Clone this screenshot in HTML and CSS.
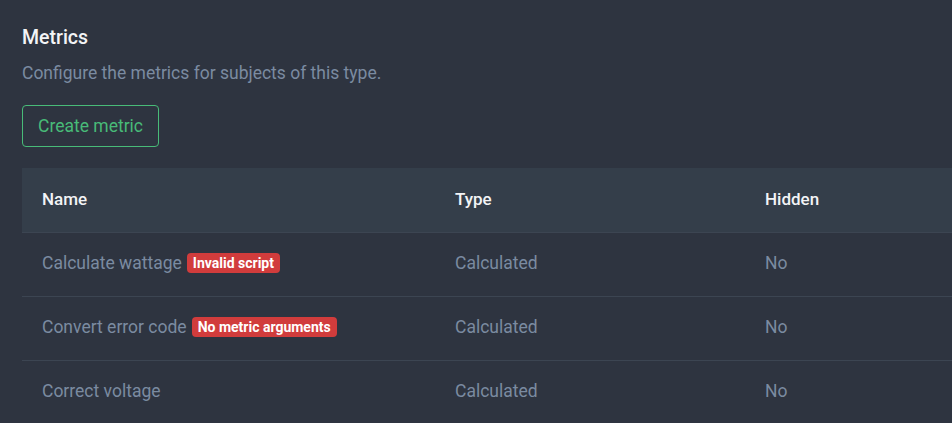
FILE: index.html
```html
<!DOCTYPE html>
<html lang="en">
<head>
<meta charset="utf-8">
<title>Metrics</title>
<link rel="stylesheet" href="styles.css">
</head>
<body>
<main class="page">
  <h2 class="title">Metrics</h2>
  <p class="subtitle">Configure the metrics for subjects of this type.</p>
  <button class="btn-create" type="button">Create metric</button>
  <div class="table">
    <div class="row head">
      <div class="cell">Name</div>
      <div class="cell">Type</div>
      <div class="cell">Hidden</div>
    </div>
    <div class="row">
      <div class="cell">Calculate wattage <span class="badge">Invalid script</span></div>
      <div class="cell">Calculated</div>
      <div class="cell">No</div>
    </div>
    <div class="row">
      <div class="cell">Convert error code <span class="badge">No metric arguments</span></div>
      <div class="cell">Calculated</div>
      <div class="cell">No</div>
    </div>
    <div class="row">
      <div class="cell">Correct voltage</div>
      <div class="cell">Calculated</div>
      <div class="cell">No</div>
    </div>
  </div>
</main>
</body>
</html>
```

FILE: styles.css
```css
html, body {
  margin: 0;
  padding: 0;
  background: #2e3440;
  overflow: hidden;
}
body {
  font-family: Roboto, "Liberation Sans", sans-serif;
  color: #7b8ba1;
}
.page {
  padding: 24px 0 0 22px;
}
.title {
  margin: 0;
  font-size: 19.5px;
  line-height: 28px;
  font-weight: 500;
  color: #f3f4f6;
}
.subtitle {
  margin: 8px 0 0;
  font-size: 17.5px;
  line-height: 26px;
  color: #7b8ba1;
}
.btn-create {
  margin-top: 19px;
  height: 42px;
  padding: 0 15px;
  background: transparent;
  border: 1px solid #48bb78;
  border-radius: 4px;
  color: #48bb78;
  font-family: inherit;
  font-size: 17.5px;
  display: block;
}
.table {
  margin-top: 21px;
}
.row {
  display: grid;
  grid-template-columns: 413px 310px 1fr;
  height: 64px;
  align-items: center;
  border-top: 1px solid #3c4552;
  box-sizing: border-box;
}
.row.head {
  background: #343e4a;
  border-top: none;
  color: #f3f4f6;
  font-weight: 500;
}
.row.head .cell {
  font-size: 17px;
  padding-bottom: 2px;
}
.cell {
  padding-left: 20px;
  padding-bottom: 3px;
  font-size: 17.5px;
  display: flex;
  align-items: center;
  gap: 5px;
}
.badge {
  background: #d13c3c;
  color: #ffffff;
  font-size: 14px;
  font-weight: 700;
  line-height: 20px;
  padding: 0 6px;
  border-radius: 4px;
}
```
